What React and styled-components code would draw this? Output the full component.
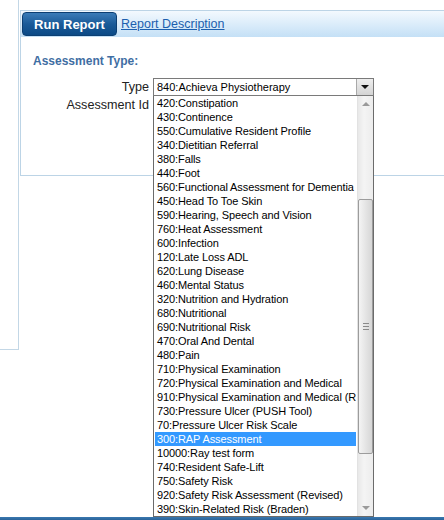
import React from 'react'
import styled, { createGlobalStyle } from 'styled-components'

// assessment report screen with the type dropdown opened

const GlobalStyle = createGlobalStyle`
  html, body {
    margin: 0;
    padding: 0;
    background: #ffffff;
  }
  * {
    box-sizing: border-box;
  }
`

const Page = styled.div`
  width: 444px;
  height: 520px;
  overflow: hidden;
  display: flex;
  flex-direction: column;
  font-family: "Liberation Sans", Arial, sans-serif;
  background: #ffffff;
`
const Row = styled.div`
  flex: 1;
  display: flex;
  align-items: flex-start;
  gap: 1px;
`
const Sidebar = styled.div`
  width: 19px;
  height: 350px;
  flex-shrink: 0;
  border-right: 1px solid #c3d7e6;
  border-bottom: 1px solid #c3d7e6;
`
const Panel = styled.div`
  width: 440px;
  height: 166px;
  flex-shrink: 0;
  margin-top: 10px;
  border: 1px solid #bcd4e6;
  border-right: none;
`
const Header = styled.div`
  height: 26px;
  display: flex;
  align-items: flex-start;
  gap: 4px;
  padding: 1px 0 0 1px;
  background: linear-gradient(#f3f9fe, #c4e0f6);
`
const RunButton = styled.button`
  height: 24px;
  width: 95px;
  padding: 0;
  border: 1px solid #0c3f73;
  border-radius: 4px;
  background: linear-gradient(#3b7cb8, #1a5a98 50%, #0c4a86);
  color: #ffffff;
  font-family: "Liberation Sans", Arial, sans-serif;
  font-weight: bold;
  font-size: 13px;
  cursor: pointer;
`
const Link = styled.a`
  margin-top: 5px;
  color: #1c5fae;
  font-size: 12.5px;
  text-decoration: underline;
  cursor: pointer;
`
const Body = styled.div`
  padding: 17px 0 0 12px;
`
const Heading = styled.div`
  color: #3f6ea3;
  font-weight: bold;
  font-size: 12px;
  line-height: 14px;
`
const Form = styled.div`
  margin: 10px 0 0 -12px;
  display: grid;
  grid-template-columns: 128px 221px;
  column-gap: 4px;
  row-gap: 0;
`
const Label = styled.div`
  text-align: right;
  font-size: 12.6px;
  color: #222222;
  line-height: 18px;
  height: 18px;
`
const SelectWrap = styled.div`
  position: relative;
  height: 18px;
`
const SelectBox = styled.div`
  height: 18px;
  display: flex;
  align-items: center;
  border: 1px solid #7a7a7a;
  background: #ffffff;
  font-size: 11px;
  color: #000000;
  padding-left: 3px;
`
const SelectText = styled.span`
  flex: 1;
  white-space: nowrap;
  overflow: hidden;
`
const ArrowButton = styled.span`
  width: 17px;
  height: 16px;
  display: flex;
  align-items: center;
  justify-content: center;
  border-left: 1px solid #a9a9a9;
  background: linear-gradient(#eeeeee, #d4d4d4);
`
const DownTri = styled.span`
  width: 0;
  height: 0;
  border-left: 4px solid transparent;
  border-right: 4px solid transparent;
  border-top: 4px solid ${p => p.$color || '#111111'};
`
const UpTri = styled.span`
  width: 0;
  height: 0;
  border-left: 4px solid transparent;
  border-right: 4px solid transparent;
  border-bottom: 4px solid ${p => p.$color || '#111111'};
`
const List = styled.div`
  position: absolute;
  top: 18px;
  left: 0;
  width: 221px;
  height: 421px;
  display: flex;
  border: 1px solid #6b6b6b;
  border-top: none;
  background: #ffffff;
  z-index: 5;
`
const Options = styled.div`
  flex: 1;
  padding: 0 1px;
  overflow: hidden;
`
const Option = styled.div`
  height: 14px;
  line-height: 14px;
  font-size: 11px;
  letter-spacing: -0.1px;
  padding-left: 2px;
  white-space: nowrap;
  overflow: hidden;
  color: ${p => (p.$active ? '#ffffff' : '#000000')};
  background: ${p => (p.$active ? '#3399ff' : 'transparent')};
`
const Scrollbar = styled.div`
  width: 16px;
  display: flex;
  flex-direction: column;
  background: linear-gradient(90deg, #e8e8e8, #f4f4f4 40%, #ececec);
  border-left: 1px solid #e2e2e2;
`
const ScrollArrow = styled.div`
  height: 16px;
  display: flex;
  align-items: center;
  justify-content: center;
`
const Track = styled.div`
  flex: 1;
  display: flex;
  flex-direction: column;
`
const Thumb = styled.div`
  display: flex;
  align-items: center;
  justify-content: center;
  border: 1px solid #9c9c9c;
  border-radius: 2px;
  background: linear-gradient(90deg, #f4f4f4, #e2e2e2 60%, #d6d6d6);
`
const Grip = styled.div`
  width: 6px;
  height: 7px;
  border-top: 1px solid #8a8a8a;
  border-bottom: 1px solid #8a8a8a;
  position: relative;
  &::after {
    content: '';
    position: absolute;
    left: 0;
    right: 0;
    top: 2px;
    border-top: 1px solid #8a8a8a;
  }
`
const Strip = styled.div`
  height: 3px;
  background: linear-gradient(#3a78b0, #2a6399);
`

const options = [
  '420:Constipation',
  '430:Continence',
  '550:Cumulative Resident Profile',
  '340:Dietitian Referral',
  '380:Falls',
  '440:Foot',
  '560:Functional Assessment for Dementia',
  '450:Head To Toe Skin',
  '590:Hearing, Speech and Vision',
  '760:Heat Assessment',
  '600:Infection',
  '120:Late Loss ADL',
  '620:Lung Disease',
  '460:Mental Status',
  '320:Nutrition and Hydration',
  '680:Nutritional',
  '690:Nutritional Risk',
  '470:Oral And Dental',
  '480:Pain',
  '710:Physical Examination',
  '720:Physical Examination and Medical',
  '910:Physical Examination and Medical (Revised)',
  '730:Pressure Ulcer (PUSH Tool)',
  '70:Pressure Ulcer Risk Scale',
  '300:RAP Assessment',
  '10000:Ray test form',
  '740:Resident Safe-Lift',
  '750:Safety Risk',
  '920:Safety Risk Assessment (Revised)',
  '390:Skin-Related Risk (Braden)',
]

export default function App() {
  const selected = '300:RAP Assessment'
  return (
    <Page>
      <GlobalStyle />
      <Row>
        <Sidebar />
        <Panel>
          <Header>
            <RunButton>Run Report</RunButton>
            <Link>Report Description</Link>
          </Header>
          <Body>
            <Heading>Assessment Type:</Heading>
            <Form>
              <Label>Type</Label>
              <SelectWrap>
                <SelectBox>
                  <SelectText>840:Achieva Physiotherapy</SelectText>
                  <ArrowButton>
                    <DownTri />
                  </ArrowButton>
                </SelectBox>
                <List>
                  <Options>
                    {options.map(o => (
                      <Option key={o} $active={o === selected}>{o}</Option>
                    ))}
                  </Options>
                  <Scrollbar>
                    <ScrollArrow>
                      <UpTri $color="#9a9a9a" />
                    </ScrollArrow>
                    <Track>
                      <Thumb style={{ marginTop: 87, height: 255 }}>
                        <Grip />
                      </Thumb>
                    </Track>
                    <ScrollArrow>
                      <DownTri $color="#9a9a9a" />
                    </ScrollArrow>
                  </Scrollbar>
                </List>
              </SelectWrap>
              <Label>Assessment Id</Label>
              <SelectWrap />
            </Form>
          </Body>
        </Panel>
      </Row>
      <Strip />
    </Page>
  )
}
